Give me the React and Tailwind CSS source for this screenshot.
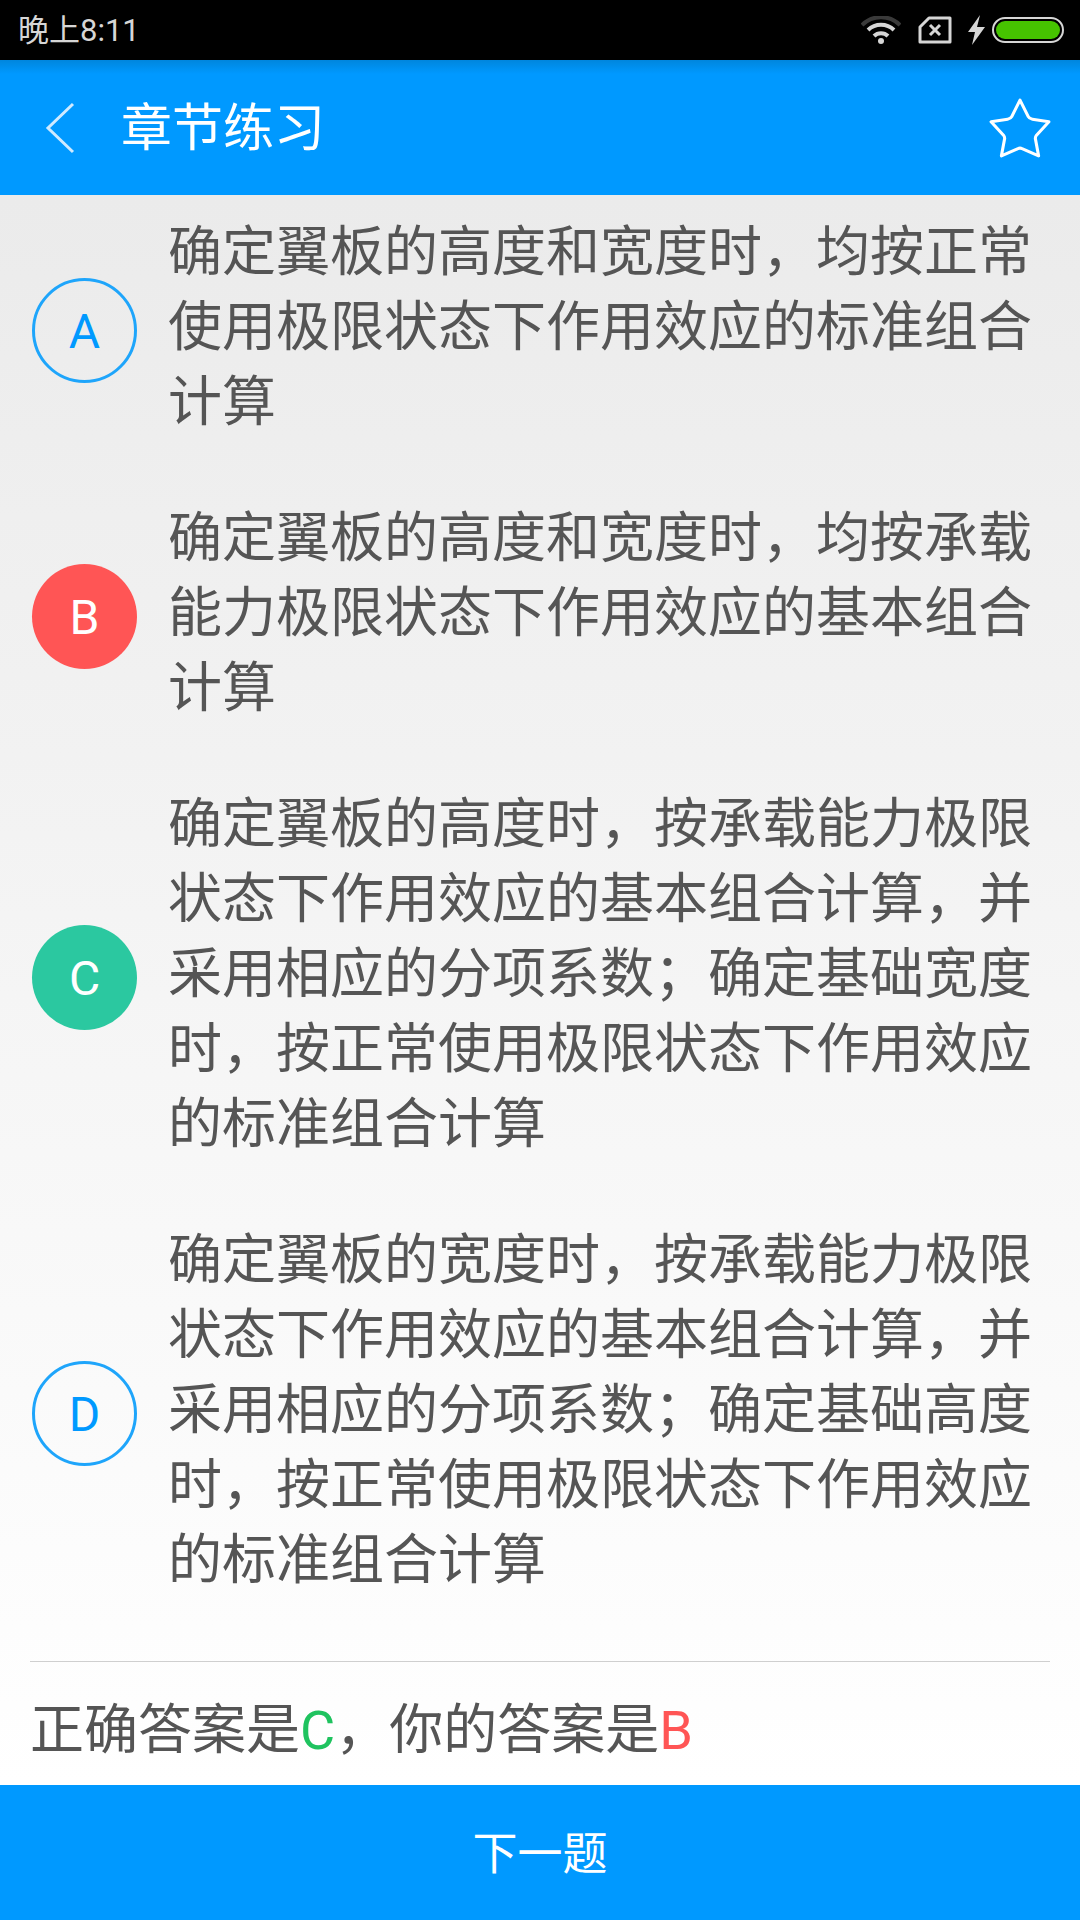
import React from 'react';

const FONT = "font-['Roboto','Noto_Sans_CJK_SC',sans-serif]";

const options = [
  {
    key: 'A',
    circle: 'border-[3px] border-[#1ea5fb] text-[#0099ff]',
    text: '确定翼板的高度和宽度时，均按正常使用极限状态下作用效应的标准组合计算',
  },
  {
    key: 'B',
    circle: 'bg-[#ff5555] text-white',
    text: '确定翼板的高度和宽度时，均按承载能力极限状态下作用效应的基本组合计算',
  },
  {
    key: 'C',
    circle: 'bg-[#2bc8a0] text-white',
    text: '确定翼板的高度时，按承载能力极限状态下作用效应的基本组合计算，并采用相应的分项系数；确定基础宽度时，按正常使用极限状态下作用效应的标准组合计算',
  },
  {
    key: 'D',
    circle: 'border-[3px] border-[#1ea5fb] text-[#0099ff]',
    text: '确定翼板的宽度时，按承载能力极限状态下作用效应的基本组合计算，并采用相应的分项系数；确定基础高度时，按正常使用极限状态下作用效应的标准组合计算',
  },
];

const StatusIcons = () => (
  <div className="flex items-center">
    <svg width="40" height="28" viewBox="0 0 40 28" className="mr-[17px]">
      <path d="M1 9 A27 27 0 0 1 39 9" fill="none" stroke="#3a3a3a" strokeWidth="4" />
      <path d="M7 14 A19 19 0 0 1 33 14" fill="none" stroke="#d6d6d6" strokeWidth="4" />
      <path d="M13 20 A10 10 0 0 1 27 20" fill="none" stroke="#d6d6d6" strokeWidth="4" />
      <circle cx="20" cy="25" r="3" fill="#d6d6d6" />
    </svg>
    <svg width="34" height="28" viewBox="0 0 34 28" className="mr-[16px]">
      <path d="M11 2 H32 V26 H2 V11 Z" fill="none" stroke="#d6d6d6" strokeWidth="3" strokeLinejoin="round" />
      <path d="M12 9 L22 19 M22 9 L12 19" stroke="#d6d6d6" strokeWidth="3" />
    </svg>
    <svg width="17" height="30" viewBox="0 0 17 30" className="mr-[7px]">
      <path d="M12 0 L0 17 H7 L4 30 L17 12 H9 Z" fill="#d6d6d6" />
    </svg>
    <div className="mr-[2px] h-[26px] w-[72px] rounded-full border-2 border-[#d6d6d6] p-[2px]">
      <div className="h-full w-full rounded-full bg-[#46c400]" />
    </div>
  </div>
);

const App = () => {
  return (
    <div className={`flex h-[1920px] w-[1080px] flex-col overflow-hidden ${FONT}`}>
      <div className="flex h-[60px] items-center justify-between bg-black pl-[18px] pr-[14px]">
        <span className="text-[31px] leading-none text-[#d6d6d6]">晚上8:11</span>
        <StatusIcons />
      </div>

      <div className="relative flex h-[135px] items-center bg-[#0099ff]">
        <div className="absolute inset-x-0 top-0 h-[14px] bg-gradient-to-b from-[#0086dd] to-[#0099ff]" />
        <svg width="30" height="52" viewBox="0 0 30 52" className="ml-[45px]">
          <path d="M28 2 L3 26 L28 50" fill="none" stroke="#cfeaff" strokeWidth="3" />
        </svg>
        <span className="ml-[46px] pt-[2px] text-[51px] leading-none text-white">章节练习</span>
        <svg width="64" height="64" viewBox="0 0 62 62" className="ml-auto mr-[28px] mt-[2px]">
          <path
            d="M31 3 L39 19 Q40 21 43 21.5 L59 24 L47 37 Q45.5 39 46 41 L49 57 L33 50 Q31 49 29 50 L13 57 L16 41 Q16.5 39 15 37 L3 24 L19 21.5 Q22 21 23 19 Z"
            fill="none"
            stroke="white"
            strokeWidth="3"
            strokeLinejoin="round"
          />
        </svg>
      </div>

      <div className="flex min-h-0 flex-1 flex-col bg-gradient-to-b from-[#ebebeb] to-white">
        <div className="flex flex-col gap-[61px] pt-[20px]">
          {options.map((o) => (
            <div key={o.key} className="flex items-center pl-[32px]">
              <div className={`mt-[5px] flex h-[105px] w-[105px] shrink-0 items-center justify-center rounded-full pt-[4px] text-[48px] ${o.circle}`}>
                {o.key}
              </div>
              <p className="ml-[31px] w-[864px] text-[54px] leading-[75px] text-[#555555]">{o.text}</p>
            </div>
          ))}
        </div>
        <div className="mx-[30px] mt-auto h-px bg-[#cfcfcf]" />
        <div className="flex h-[123px] items-center pl-[30px] pt-[14px] text-[54px] text-[#555555]">
          正确答案是<span className="text-[#1fc35f]">C</span>，你的答案是<span className="text-[#ff5555]">B</span>
        </div>
      </div>

      <div className="flex h-[135px] items-center justify-center bg-[#0099ff] pt-[4px] text-[45px] text-white">下一题</div>
    </div>
  );
};

export default App;
